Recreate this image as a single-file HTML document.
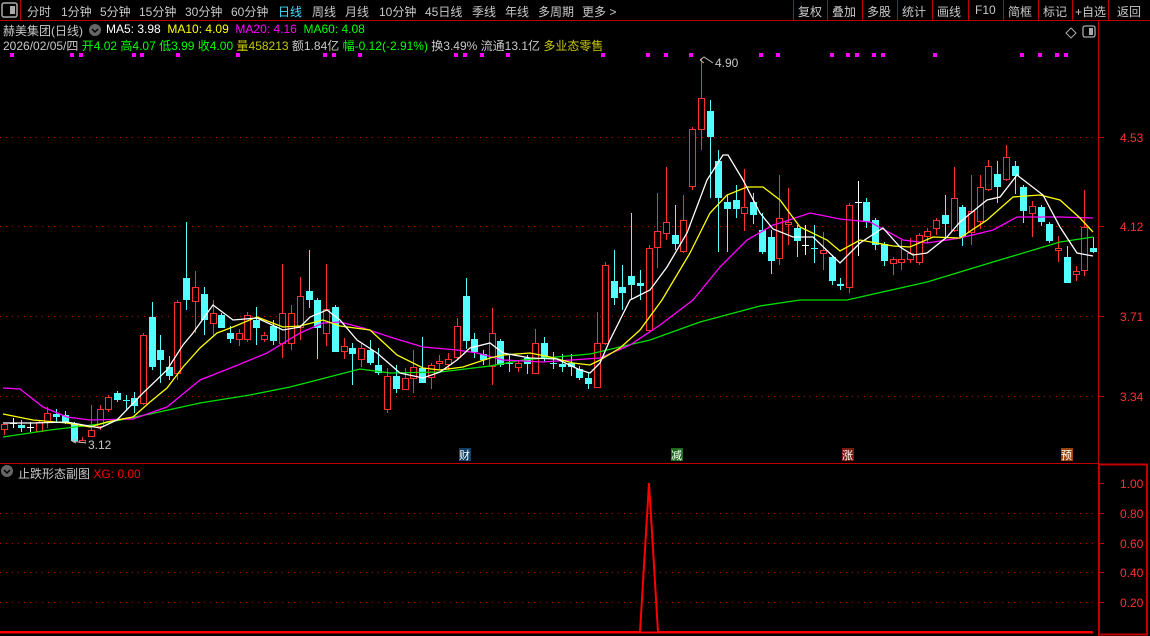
<!DOCTYPE html>
<html><head><meta charset="utf-8"><style>
body{margin:0;background:#000;width:1150px;height:636px;overflow:hidden;font-family:"Liberation Sans","Noto Sans CJK SC",sans-serif;font-size:12px;color:#c8c8c8;position:relative}
.t{position:absolute;white-space:nowrap}
svg{position:absolute;left:0;top:0}
</style></head><body>
<svg width="1150" height="636" id="s" xmlns="http://www.w3.org/2000/svg">
<rect x="2" y="3" width="15" height="14" rx="2" fill="none" stroke="#aaa" stroke-width="1.5"/>
<rect x="10" y="6" width="5" height="8" fill="#aaa"/>
<line x1="0" y1="20.5" x2="1150" y2="20.5" stroke="#c00000"/>
<line x1="20.5" y1="0" x2="20.5" y2="20" stroke="#c00000"/>
<g stroke="#c00000">
<line x1="793.5" y1="0" x2="793.5" y2="20"/><line x1="827.5" y1="0" x2="827.5" y2="20"/><line x1="862.5" y1="0" x2="862.5" y2="20"/><line x1="897.5" y1="0" x2="897.5" y2="20"/><line x1="932.5" y1="0" x2="932.5" y2="20"/><line x1="968.5" y1="0" x2="968.5" y2="20"/><line x1="1003.5" y1="0" x2="1003.5" y2="20"/><line x1="1038.5" y1="0" x2="1038.5" y2="20"/><line x1="1072.5" y1="0" x2="1072.5" y2="20"/><line x1="1108.5" y1="0" x2="1108.5" y2="20"/>
<line x1="1098.5" y1="20" x2="1098.5" y2="636"/>
<line x1="0" y1="463.5" x2="1098" y2="463.5"/>
</g>
<rect x="1099" y="464.5" width="48" height="170" fill="none" stroke="#c00000" stroke-width="2"/>
<line x1="0" y1="632.5" x2="1093" y2="632.5" stroke="#f00" stroke-width="2"/>
<g stroke="#c00000" stroke-dasharray="1 5">
<line x1="0" y1="137.5" x2="1098" y2="137.5"/><line x1="0" y1="226.5" x2="1098" y2="226.5"/><line x1="0" y1="316.5" x2="1098" y2="316.5"/><line x1="0" y1="396.5" x2="1098" y2="396.5"/>
<line x1="0" y1="513.5" x2="1093" y2="513.5"/><line x1="0" y1="543.5" x2="1093" y2="543.5"/><line x1="0" y1="572.5" x2="1093" y2="572.5"/><line x1="0" y1="602.5" x2="1093" y2="602.5"/>
</g>
<g stroke="#c00000"><line x1="1099" y1="483.5" x2="1104" y2="483.5"/><line x1="1099" y1="513.5" x2="1104" y2="513.5"/><line x1="1099" y1="543.5" x2="1104" y2="543.5"/><line x1="1099" y1="572.5" x2="1104" y2="572.5"/><line x1="1099" y1="602.5" x2="1104" y2="602.5"/>
<line x1="1099" y1="137.5" x2="1104" y2="137.5"/><line x1="1099" y1="226.5" x2="1104" y2="226.5"/><line x1="1099" y1="316.5" x2="1104" y2="316.5"/><line x1="1099" y1="396.5" x2="1104" y2="396.5"/></g>
<g fill="#ff3030" font-size="12" font-family="Liberation Sans">
<text x="1120" y="142">4.53</text><text x="1120" y="231">4.12</text><text x="1120" y="321">3.71</text><text x="1120" y="401">3.34</text>
<text x="1120" y="488">1.00</text><text x="1120" y="518">0.80</text><text x="1120" y="548">0.60</text><text x="1120" y="577">0.40</text><text x="1120" y="607">0.20</text>
</g>
<polyline points="0,632 640,632 649,483 658,632 1093,632" fill="none" stroke="#f00" stroke-width="2"/>
<g id="cd"></g>
<polyline fill="none" stroke="#00e000" stroke-width="1.3" points="3,437 50,430 100,424 150,414 200,403 250,395 290,387 360,369 390,373 440,372 490,366 523,360 590,354 650,340 700,322 760,306 800,300 847,300 927,282 993,262 1060,242 1093,237"/>
<polyline fill="none" stroke="#ff00ff" stroke-width="1.3" points="3,388 20,389 43,407 67,417 90,420 133,419 167,407 200,380 233,367 267,353 300,333 323,323 340,322 363,328 390,337 423,347 457,350 477,353 503,360 543,362 600,358 630,345 660,325 693,300 720,267 747,240 773,225 780,223 810,213 840,219 870,222 903,240 927,243 960,238 993,230 1017,217 1060,217 1093,218"/>
<polyline fill="none" stroke="#ffff00" stroke-width="1.3" points="3,414 33,420 67,423 90,427 107,422 133,417 150,402 167,388 183,367 200,348 217,333 233,327 257,317 283,327 300,326 323,320 340,326 370,330 397,355 423,368 440,370 463,367 490,358 503,355 530,353 550,357 573,363 590,365 600,360 620,348 640,330 662,300 690,253 710,213 727,195 747,187 763,187 780,200 800,227 827,240 840,251 860,240 893,246 910,247 933,237 960,238 987,220 1013,197 1040,195 1060,200 1080,218 1093,232"/>
<polyline fill="none" stroke="#ffffff" stroke-width="1.3" points="3,423 33,423 67,422 100,428 117,420 143,393 167,370 183,345 193,333 213,305 233,320 257,318 283,330 300,327 310,317 327,310 340,320 357,340 377,353 400,373 423,378 440,372 457,360 470,348 490,343 503,353 530,358 557,359 580,370 590,373 600,363 610,340 620,320 630,300 650,290 667,267 687,233 707,180 723,155 728,155 743,180 760,213 773,229 793,237 813,237 840,263 860,243 883,228 900,247 913,255 927,253 947,237 960,222 987,200 1000,197 1017,175 1043,195 1060,227 1077,253 1093,256"/>
<g id="dots" fill="#ff00ff"></g>
<g fill="none" stroke="#bbb"><path d="M700,60 L704,57 L713,63 M700,60 L704,63"/><path d="M76,443 L72,441 L86,443 M72,441 L76,439"/></g>
<text x="715" y="67" fill="#c8c8c8" font-size="12" font-family="Liberation Sans">4.90</text>
<text x="88" y="449" fill="#c8c8c8" font-size="12" font-family="Liberation Sans">3.12</text>
<rect x="459" y="448" width="12" height="13" fill="#10406a"/>
<rect x="671" y="448" width="12" height="13" fill="#1e6a1e"/>
<rect x="842" y="448" width="12" height="13" fill="#7a1a10"/>
<rect x="1061" y="448" width="12" height="13" fill="#a04010"/>
<g fill="#fff" font-size="11" font-family="Noto Sans CJK SC"><text x="459" y="459">财</text><text x="671" y="459">减</text><text x="842" y="459">涨</text><text x="1061" y="459">预</text></g>
<path d="M1066,33 L1071,28 L1076,33 L1071,38Z" fill="none" stroke="#aaa"/>
<rect x="1083" y="26" width="12" height="11" rx="2" fill="none" stroke="#aaa" stroke-width="1.3"/><rect x="1089" y="28" width="4" height="7" fill="#aaa"/>
<circle cx="95" cy="30" r="6" fill="#666"/><path d="M92,29 L95,32 L98,29" stroke="#000" fill="none" stroke-width="1.5"/>
<circle cx="7" cy="471" r="6" fill="#666"/><path d="M4,470 L7,473 L10,470" stroke="#000" fill="none" stroke-width="1.5"/>
</svg>
<div class="t" style="left:27px;top:3px">分时</div><div class="t" style="left:61px;top:3px">1分钟</div><div class="t" style="left:100px;top:3px">5分钟</div><div class="t" style="left:139px;top:3px">15分钟</div><div class="t" style="left:185px;top:3px">30分钟</div><div class="t" style="left:231px;top:3px">60分钟</div><div class="t" style="left:278px;top:3px;color:#40e0ff">日线</div><div class="t" style="left:312px;top:3px">周线</div><div class="t" style="left:345px;top:3px">月线</div><div class="t" style="left:379px;top:3px">10分钟</div><div class="t" style="left:425px;top:3px">45日线</div><div class="t" style="left:472px;top:3px">季线</div><div class="t" style="left:505px;top:3px">年线</div><div class="t" style="left:538px;top:3px">多周期</div><div class="t" style="left:582px;top:3px">更多 &gt;</div>
<div class="t" style="left:798px;top:3px">复权</div><div class="t" style="left:832px;top:3px">叠加</div><div class="t" style="left:867px;top:3px">多股</div><div class="t" style="left:902px;top:3px">统计</div><div class="t" style="left:937px;top:3px">画线</div><div class="t" style="left:975px;top:3px">F10</div><div class="t" style="left:1008px;top:3px">简框</div><div class="t" style="left:1043px;top:3px">标记</div><div class="t" style="left:1075px;top:3px">+自选</div><div class="t" style="left:1117px;top:3px">返回</div>
<div class="t" style="left:3px;top:22px">赫美集团(日线)</div>
<div class="t" style="left:106px;top:22px"><span style="color:#fff">MA5: 3.98</span>&nbsp; <span style="color:#ff0">MA10: 4.09</span>&nbsp; <span style="color:#f0f">MA20: 4.16</span>&nbsp; <span style="color:#0f0">MA60: 4.08</span></div>
<div class="t" style="left:3px;top:37px">2026/02/05/四 <span style="color:#0f0">开4.02 高4.07 低3.99 收4.00</span> <span style="color:#c8c800">量458213</span> 额1.84亿 <span style="color:#0f0">幅-0.12(-2.91%)</span> 换3.49% 流通13.1亿 <span style="color:#c8c800">多业态零售</span></div>
<div class="t" style="left:18px;top:465px">止跌形态副图 <span style="color:#f00">XG: 0.00</span></div>
<script>
var C=[[4,'r',424,429,424,435],[13,'w',423,423,418,428],[21,'c',425,428,420,432],[30,'w',427,427,422,432],[39,'r',422,431,420,431],[47,'r',413,422,407,428],[56,'c',414,417,409,423],[65,'c',415,422,411,424],[74,'c',424,441,422,441],[82,'r',440,442,437,443],[91,'r',430,436,405,436],[100,'r',409,426,405,430],[108,'r',397,409,395,412],[117,'c',393,400,391,402],[126,'c',400,401,395,410],[134,'c',398,406,392,413],[143,'r',335,403,333,405],[152,'c',317,367,302,370],[160,'c',350,360,335,383],[169,'c',367,376,356,380],[177,'r',302,373,300,380],[186,'c',278,300,222,310],[195,'r',287,301,271,333],[204,'c',294,320,287,335],[213,'r',313,323,300,337],[221,'c',315,328,313,326],[230,'c',333,339,326,343],[239,'r',333,339,329,346],[247,'r',315,339,312,342],[256,'c',320,328,307,345],[264,'r',335,339,332,342],[273,'c',326,341,320,345],[282,'r',313,343,264,358],[291,'r',313,343,305,350],[300,'r',296,327,277,340],[309,'c',291,300,250,308],[317,'c',300,328,298,359],[326,'r',309,333,264,346],[335,'c',307,352,305,352],[344,'r',346,351,338,359],[352,'c',348,354,343,385],[361,'r',348,359,343,367],[370,'c',350,363,340,365],[378,'c',365,373,348,375],[387,'r',376,409,368,413],[396,'c',376,389,365,393],[405,'r',378,389,368,389],[413,'r',367,378,350,393],[422,'c',368,383,337,383],[431,'r',365,377,363,389],[439,'r',361,363,355,370],[448,'r',359,364,353,370],[457,'r',326,357,318,360],[466,'c',296,341,278,349],[474,'c',339,352,333,358],[483,'c',354,360,350,365],[492,'r',333,366,308,385],[500,'c',341,365,339,367],[509,'c',363,364,355,372],[518,'r',363,367,360,372],[527,'c',358,364,355,374],[535,'r',343,373,329,373],[544,'c',343,359,337,362],[553,'c',363,364,352,369],[562,'c',364,367,354,372],[571,'c',363,367,354,376],[579,'c',369,378,366,380],[588,'c',378,384,372,389],[597,'r',343,387,312,387],[605,'r',265,343,262,345],[614,'c',281,298,250,305],[622,'c',287,293,265,310],[631,'c',276,285,213,300],[640,'c',283,286,270,300],[649,'r',248,330,245,333],[657,'r',231,247,193,268],[666,'r',222,233,167,240],[675,'c',235,244,205,250],[683,'r',220,251,195,253],[692,'r',129,186,127,190],[701,'r',98,129,58,150],[710,'c',111,137,100,198],[718,'c',161,198,150,252],[727,'c',202,209,195,252],[736,'c',200,209,185,218],[744,'r',207,213,169,231],[753,'c',202,215,193,224],[762,'c',230,252,213,254],[771,'c',237,261,230,274],[779,'r',218,258,175,265],[788,'r',222,224,188,245],[797,'c',228,241,225,257],[805,'w',245,245,225,255],[814,'c',248,249,225,263],[823,'r',250,253,232,270],[832,'c',257,281,255,285],[840,'c',284,286,278,290],[849,'r',205,287,203,293],[858,'w',202,202,181,256],[866,'c',202,222,198,228],[875,'c',220,245,218,250],[884,'c',244,261,242,266],[893,'r',259,263,257,275],[901,'r',259,262,240,270],[910,'r',253,259,238,263],[919,'r',235,262,233,265],[927,'r',231,236,228,243],[936,'r',220,228,218,235],[945,'c',215,224,195,237],[954,'r',198,230,167,232],[962,'c',207,237,205,246],[971,'r',211,232,175,245],[980,'r',187,221,175,229],[988,'r',166,189,160,191],[997,'c',174,187,161,203],[1006,'r',157,179,145,181],[1015,'c',166,176,161,194],[1023,'c',187,211,185,223],[1032,'r',206,213,201,237],[1041,'c',207,222,205,226],[1049,'c',224,241,222,243],[1058,'r',248,250,236,262],[1067,'c',257,283,246,283],[1076,'r',271,274,266,281],[1084,'r',227,270,190,276],[1093,'c',248,252,237,253]];
var h='',col={r:'#ff3030',c:'#54ffff',w:'#ffffff'};
C.forEach(function(d){var x=d[0],k=col[d[1]],t=d[2],b=d[3],hi=d[4],lo=d[5];
h+='<line x1="'+(x+.5)+'" y1="'+hi+'" x2="'+(x+.5)+'" y2="'+lo+'" stroke="'+k+'"/>';
if(b-t<1.5){h+='<line x1="'+(x-3)+'" y1="'+(t+.5)+'" x2="'+(x+4)+'" y2="'+(t+.5)+'" stroke="'+k+'"/>';}
else if(d[1]=='r'){h+='<rect x="'+(x-2.5)+'" y="'+(t+.5)+'" width="6" height="'+(b-t)+'" fill="#000" stroke="'+k+'"/>';}
else{h+='<rect x="'+(x-3)+'" y="'+t+'" width="7" height="'+(b-t)+'" fill="'+k+'"/>';}});
var ns='http://www.w3.org/2000/svg';
var g=document.getElementById('cd');var tmp=new DOMParser().parseFromString('<svg xmlns="'+ns+'">'+h+'</svg>','image/svg+xml');
Array.prototype.slice.call(tmp.documentElement.childNodes).forEach(function(n){g.appendChild(document.importNode(n,true));});
var D=[12,72,81,134,142,178,238,325,334,360,456,465,482,508,603,648,666,691,761,778,832,848,857,874,883,935,1022,1040,1057,1066],dh='';
var dg=document.getElementById('dots');D.forEach(function(x){var r=document.createElementNS(ns,'rect');r.setAttribute('x',x-2);r.setAttribute('y',53);r.setAttribute('width',4);r.setAttribute('height',4);dg.appendChild(r);});
</script>
</body></html>
